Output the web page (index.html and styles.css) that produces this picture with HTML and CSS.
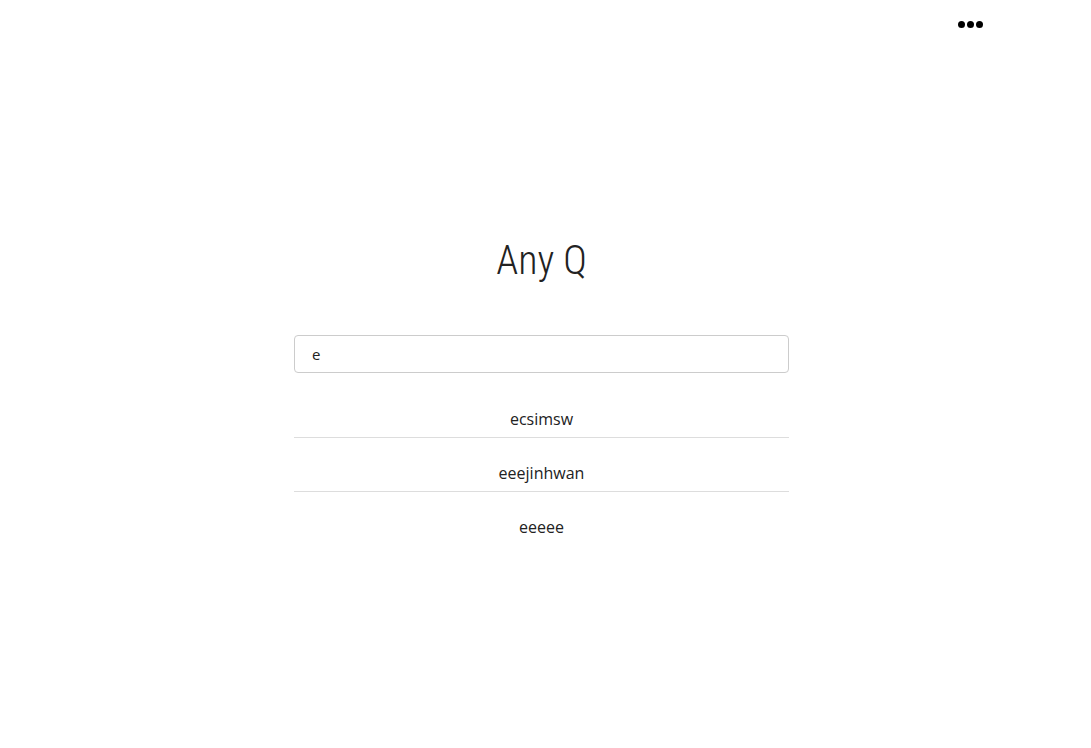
FILE: index.html
```html
<!DOCTYPE html>
<html>
<head>
<meta charset="utf-8">
<link rel="stylesheet" href="styles.css">
</head>
<body>
<header class="topbar">
  <button class="more" aria-label="more">
    <span class="dot"></span><span class="dot"></span><span class="dot"></span>
  </button>
</header>
<main class="main">
  <h1 class="title">Any Q</h1>
  <input class="search" type="text" value="e">
  <ul class="results">
    <li class="item">ecsimsw</li>
    <li class="item">eeejinhwan</li>
    <li class="item">eeeee</li>
  </ul>
</main>
</body>
</html>
```
FILE: styles.css
```css
html, body {
  margin: 0;
  padding: 0;
  background: #fff;
}
body {
  font-family: "Open Sans", "Noto Sans", sans-serif;
  color: #222;
}
.topbar {
  display: flex;
  justify-content: flex-end;
  padding: 18px 108px 0 0;
  height: 31px;
  box-sizing: border-box;
}
.more {
  display: flex;
  gap: 2px;
  padding: 0;
  border: 0;
  background: none;
  height: 13px;
  align-items: center;
}
.dot {
  width: 7px;
  height: 7px;
  border-radius: 50%;
  background: #000;
}
.main {
  width: 495px;
  margin: 0 auto;
  position: relative;
  left: -4px;
  display: flex;
  flex-direction: column;
  align-items: stretch;
}
.title {
  margin: 206px 0 0;
  text-align: center;
  font-family: "Roboto Condensed", "Roboto", sans-serif;
  font-weight: 300;
  font-size: 40px;
  line-height: 48px;
  color: #222;
}
.search {
  margin-top: 50px;
  height: 38px;
  box-sizing: border-box;
  border: 1px solid #ccc;
  border-radius: 4px;
  padding: 0 17px;
  font-family: "Open Sans", sans-serif;
  font-size: 15px;
  color: #222;
  outline: none;
}
.results {
  list-style: none;
  margin: 11px 0 0;
  padding: 0;
}
.item {
  height: 54px;
  box-sizing: border-box;
  padding-top: 23px;
  text-align: center;
  font-size: 16px;
  line-height: 24px;
  border-bottom: 1px solid #ddd;
}
.item:last-child {
  border-bottom: 0;
}
```
